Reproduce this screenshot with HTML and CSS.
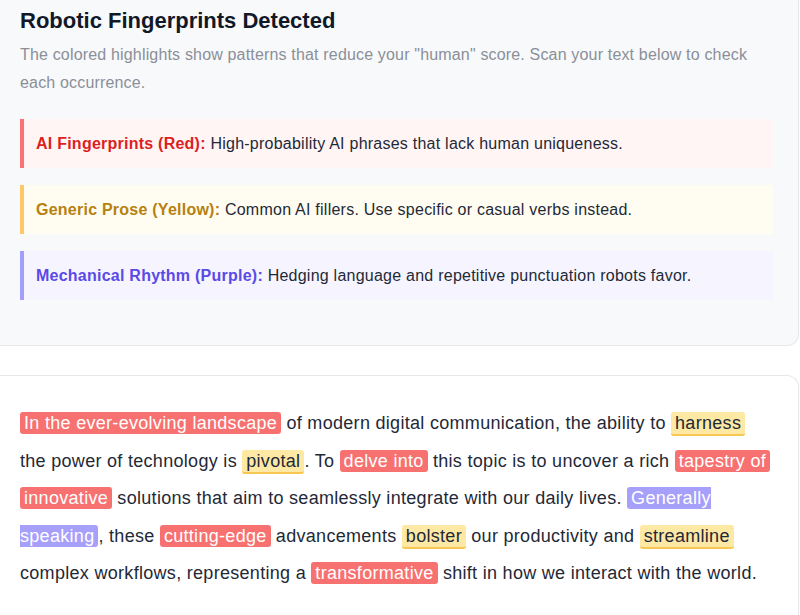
FILE: index.html
```html
<!DOCTYPE html>
<html>
<head>
    <link rel="stylesheet" href="styles.css">
</head>
<body>
    <div class="panel">
        <h2 class="panel-title">Robotic Fingerprints Detected</h2>
        <p class="panel-sub">The colored highlights show patterns that reduce your "human" score. Scan your text below to check each occurrence.</p>

        <div class="legend">
            <div class="legend-item red">
                <b>AI Fingerprints (Red):</b> High-probability AI phrases that lack human uniqueness.
            </div>
            <div class="legend-item yellow">
                <b>Generic Prose (Yellow):</b> Common AI fillers. Use specific or casual verbs instead.
            </div>
            <div class="legend-item purple">
                <b>Mechanical Rhythm (Purple):</b> Hedging language and repetitive punctuation robots favor.
            </div>
        </div>
    </div>

    <div class="result">
        <p class="result-text"><span class="hl hl-red">In the ever-evolving landscape</span> of modern digital communication, the ability to <span class="hl hl-yellow">harness</span> the power of technology is <span class="hl hl-yellow">pivotal</span>. To <span class="hl hl-red">delve into</span> this topic is to uncover a rich <span class="hl hl-red">tapestry of</span> <span class="hl hl-red">innovative</span> solutions that aim to seamlessly integrate with our daily lives. <span class="hl hl-purple">Generally speaking</span>, these <span class="hl hl-red">cutting-edge</span> advancements <span class="hl hl-yellow">bolster</span> our productivity and <span class="hl hl-yellow">streamline</span> complex workflows, representing a <span class="hl hl-red">transformative</span> shift in how we interact with the world.</p>
    </div>
</body>
</html>
```

FILE: styles.css
```css
/* 基础 */
body {
    margin: 0;
    background: #ffffff;
    font-family: 'Liberation Sans', Helvetica, Arial, sans-serif;
    color: #1f2937;
}

/* 顶部说明面板 */
.panel {
    background: #f8f9fb;
    border: 1px solid #e5e7eb;
    border-left: none;
    border-top: none;
    border-radius: 0 0 12px 0;
    margin-right: 1px;
    padding: 7px 25px 45px 20px;
}

.panel-title {
    margin: 0 0 6px;
    font-size: 22px;
    line-height: 28px;
    font-weight: bold;
    color: #111827;
}

.panel-sub {
    margin: 0;
    font-size: 16px;
    letter-spacing: 0.17px;
    line-height: 28px;
    color: #8a8f98;
}

/* 图例 */
.legend {
    display: flex;
    flex-direction: column;
    gap: 17px;
    margin-top: 22px;
}

.legend-item {
    padding: 15px 16px 15px 12px;
    border-left: 4px solid;
    font-size: 16px;
    letter-spacing: 0.24px;
    line-height: 19px;
}

.legend-item.red { background: #fff5f5; border-color: #fb7272; }
.legend-item.red b { color: #dc1f1f; }

.legend-item.yellow { background: #fffdf1; border-color: #fdc76a; }
.legend-item.yellow b { color: #b7800f; }

.legend-item.purple { background: #f6f5ff; border-color: #a39ef9; }
.legend-item.purple b { color: #5a4ae6; }

/* 检测结果 */
.result {
    margin: 29px 1px 0 0;
    background: #ffffff;
    border: 1px solid #e5e7eb;
    border-left: none;
    border-bottom: none;
    border-radius: 0 12px 0 0;
    padding: 29px 25px 40px 20px;
}

.result-text {
    margin: 0;
    font-size: 18px;
    letter-spacing: 0.3px;
    line-height: 37.5px;
    color: #1f2937;
}

.hl {
    padding: 1px 4px;
    border-radius: 3px;
}

.hl-red {
    background: #f87171;
    color: #ffffff;
    white-space: nowrap;
}

.hl-yellow {
    background: #fde8a4;
    border-bottom: 2px solid #f7c653;
    color: #1f2937;
    white-space: nowrap;
}

.hl-purple {
    background: #a6a0fb;
    color: #ffffff;
}
```
